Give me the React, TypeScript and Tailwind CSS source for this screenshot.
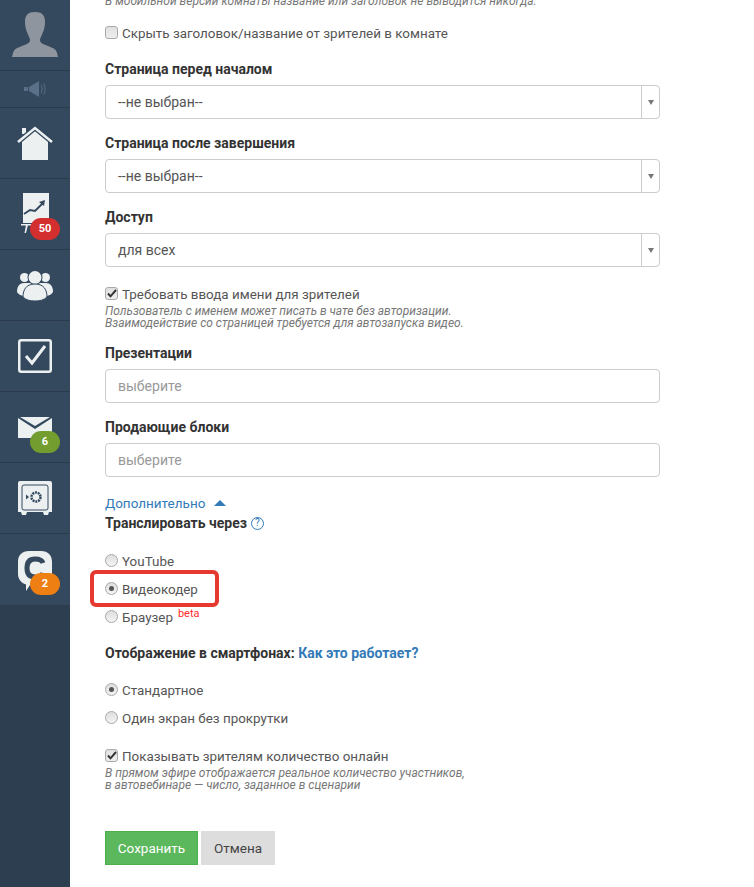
import React from 'react';

const font = { fontFamily: 'Roboto, "Noto Sans", sans-serif' };

const NavRow = ({ h, children }: { h: string; children: React.ReactNode }) => (
	<div className={`relative flex items-center justify-center border-b border-[#2b3a4c] ${h}`}>{children}</div>
);

const Badge = ({ color, children }: { color: string; children: React.ReactNode }) => (
	<span className={`absolute left-[30px] top-[39px] flex h-[22px] w-[30px] items-center justify-center rounded-[11px] text-[11px] font-bold text-white ${color}`}>
		{children}
	</span>
);

const Sidebar = () => (
	<div className="flex w-[70px] shrink-0 flex-col bg-[#2c3e50]">
		<div className="flex flex-col bg-[#34495e]">
			<NavRow h="h-[71px]">
				<svg width="46" height="46" viewBox="0 0 46 46" className="mt-[-1px]">
					<path d="M23 0c-7 0-10 3-10 10 0 4 1 8 2 10 1 3 3 6 3 8 0 3-3 4-8 6-5 2-8 3-9 7l-1 4h46l-1-4c-1-4-4-5-9-7-5-2-8-3-8-6 0-2 2-5 3-8 1-2 2-6 2-10 0-7-3-10-10-10z" fill="#8f959e" />
				</svg>
			</NavRow>
			<NavRow h="h-[37px]">
				<svg width="22" height="16" viewBox="0 0 22 16">
					<path d="M0 6h4v4H0zM5 6l10-6v16L5 10z" fill="#5a7088" />
					<path d="M17 4c1.500 2.500 1.500 5.500 0 8M19.500 2.500c2 3.500 2 7.500 0 11" fill="none" stroke="#5a7088" />
				</svg>
			</NavRow>
			<NavRow h="h-[71px]">
				<svg width="36" height="35" viewBox="0 0 36 35">
					<path d="M5 14 18 3l13 11v20H5z" fill="#ecf0f1" />
					<path d="M5 2h4v6H5z" fill="#ecf0f1" />
					<path d="M1 16 18 2l17 14" fill="none" stroke="#34495e" strokeWidth="5" />
					<path d="M1 16 18 2l17 14" fill="none" stroke="#ecf0f1" strokeWidth="2.500" />
				</svg>
			</NavRow>
			<NavRow h="h-[71px]">
				<svg width="28" height="41" viewBox="0 0 28 41" className="mt-[-1px]">
					<path d="M2 0h26v30H2z" fill="#ecf0f1" />
					<path d="M3 21l6-4 5 1 8-8" fill="none" stroke="#34495e" strokeWidth="2" />
					<path d="M24 7l-1 6-5-4z" fill="#34495e" />
					<path d="M0 31h13v1.500H0zM5 32h2l-2 8H3.500z" fill="#ecf0f1" />
				</svg>
				<Badge color="bg-[#d32f2f]">50</Badge>
			</NavRow>
			<NavRow h="h-[71px]">
				<svg width="36" height="31" viewBox="0 0 36 31">
					<circle cx="7.500" cy="7.500" r="4.500" fill="#ecf0f1" />
					<circle cx="28.500" cy="7.500" r="4.500" fill="#ecf0f1" />
					<path d="M0 22c0-6 3-9 7-9h22c4 0 7 3 7 9-1 2-3 3-6 4H6c-3-1-5-2-6-4z" fill="#ecf0f1" />
					<circle cx="18" cy="7.500" r="7.500" fill="#34495e" />
					<circle cx="18" cy="7.500" r="6.500" fill="#ecf0f1" />
					<path d="M6 27c0-7 3-13 12-13s12 6 12 13c-3 3-7 4-12 4s-9-1-12-4z" fill="#ecf0f1" stroke="#34495e" />
				</svg>
			</NavRow>
			<NavRow h="h-[71px]">
				<svg width="34" height="34" viewBox="0 0 34 34">
					<rect x="1.250" y="1.250" width="31.500" height="31.500" rx="2" fill="none" stroke="#ecf0f1" strokeWidth="2.500" />
					<path d="M8 17l6 7L27 7" fill="none" stroke="#ecf0f1" strokeWidth="3" />
				</svg>
			</NavRow>
			<NavRow h="h-[71px]">
				<svg width="34" height="21" viewBox="0 0 34 21">
					<path d="M0 1v20h34V1L17 12z" fill="#ecf0f1" />
					<path d="M2 0h30L17 9z" fill="#ecf0f1" />
				</svg>
				<Badge color="bg-[#739e2f]">6</Badge>
			</NavRow>
			<NavRow h="h-[71px]">
				<svg width="34" height="34" viewBox="0 0 34 34">
					<path d="M2 0h30a2 2 0 0 1 2 2v29h-3l-1 3h-4l-1-3H9l-1 3H4l-1-3H0V2a2 2 0 0 1 2-2z" fill="#ecf0f1" />
					<rect x="4" y="4" width="26" height="25" rx="2" fill="none" stroke="#34495e" />
					<circle cx="18" cy="16" r="4.500" fill="none" stroke="#34495e" strokeWidth="2.500" strokeDasharray="2 0.800" />
					<path d="M8 13.500v5l3-2.500z" fill="#34495e" />
				</svg>
			</NavRow>
			<div className="relative flex h-[71px] items-center justify-center">
				<svg width="34" height="40" viewBox="0 0 34 40" className="mt-[2px]">
					<path d="M11 0h12c7 0 11 4 11 11v12c0 7-4 11-11 11H12l-4 6v-6.500C3 32 0 28 0 23V11C0 4 4 0 11 0z" fill="#ecf0f1" />
					<path d="M25 12c-1-3-4-4-8-4-5 0-8 3-8 9s3 9 8 9c4 0 7-1 8-4" fill="none" stroke="#34495e" strokeWidth="5" />
				</svg>
				<Badge color="bg-[#ee7f13]">2</Badge>
			</div>
		</div>
	</div>
);

const Label = ({ mt, children }: { mt: string; children: React.ReactNode }) => (
	<div className={`text-[14px] leading-5 font-bold text-[#333333] ${mt}`}>{children}</div>
);

const Hint = ({ children }: { children: React.ReactNode }) => (
	<div className="text-[12px] leading-3 text-[#777777] italic">{children}</div>
);

const CheckBox = ({ checked }: { checked?: boolean }) => (
	<span className="flex h-[13px] w-[13px] shrink-0 items-center justify-center rounded-[3px] border border-[#a9a9a9] bg-linear-to-b from-[#e0e0e0] to-[#eeeeee]">
		{checked && (
			<svg width="10" height="9" viewBox="0 0 10 9">
				<path d="M1 4.500l2.500 2.800L9 1" fill="none" stroke="#333333" strokeWidth="2" />
			</svg>
		)}
	</span>
);

const Radio = ({ checked }: { checked?: boolean }) => (
	<span className="flex h-[13px] w-[13px] shrink-0 items-center justify-center rounded-full border border-[#a9a9a9] bg-linear-to-b from-[#dedede] to-[#f4f4f4]">
		{checked && <span className="h-[5px] w-[5px] rounded-full bg-[#555555]" />}
	</span>
);

const Option = ({ mt, box, children }: { mt: string; box: React.ReactNode; children: React.ReactNode }) => (
	<div className={`flex h-5 items-center text-[13.4px] text-[#555555] ${mt}`}>
		<span className="mt-[-4px] mr-[4px] flex">{box}</span>
		{children}
	</div>
);

const Select = ({ value }: { value: string }) => (
	<div className="mt-[6px] flex h-[34px] items-center rounded-[4px] border border-[#cccccc] text-[14px] text-[#555555]">
		<span className="flex-1 pl-[12px]">{value}</span>
		<span className="flex h-full w-[18px] items-center justify-center border-l border-[#cccccc]">
			<span className="h-0 w-0 border-x-[3px] border-t-[5px] border-x-transparent border-t-[#777777]" />
		</span>
	</div>
);

const TextInput = () => (
	<div className="mt-[6px] flex h-[34px] items-center rounded-[4px] border border-[#cccccc] pl-[12px] text-[14px] text-[#999999]">
		выберите
	</div>
);

const App = () => {
	return (
		<div className="flex h-[887px] w-[754px] overflow-hidden bg-white" style={font}>
			<Sidebar />
			<div className="relative w-[590px] shrink-0 pl-[35px]">
				<div className="mt-[-5px]">
					<Hint>В мобильной версии комнаты название или заголовок не выводится никогда.</Hint>
				</div>
				<Option mt="mt-[17px]" box={<CheckBox />}>Скрыть заголовок/название от зрителей в комнате</Option>

				<Label mt="mt-[15px]">Страница перед началом</Label>
				<Select value="--не выбран--" />
				<Label mt="mt-[14px]">Страница после завершения</Label>
				<Select value="--не выбран--" />
				<Label mt="mt-[14px]">Доступ</Label>
				<Select value="для всех" />

				<Option mt="mt-[18px]" box={<CheckBox checked />}>Требовать ввода имени для зрителей</Option>
				<div>
					<Hint>Пользователь с именем может писать в чате без авторизации.</Hint>
					<Hint>Взаимодействие со страницей требуется для автозапуска видео.</Hint>
				</div>

				<Label mt="mt-[14px]">Презентации</Label>
				<TextInput />
				<Label mt="mt-[14px]">Продающие блоки</Label>
				<TextInput />

				<div className="mt-[16px] flex h-5 items-center text-[13.5px] text-[#337ab7]">
					Дополнительно
					<span className="ml-[9px] h-0 w-0 border-x-[6px] border-b-[6px] border-x-transparent border-b-[#337ab7]" />
				</div>
				<Label mt="mt-0">
					<span className="flex items-center">
						Транслировать через
						<span className="ml-[4px] flex h-[13px] w-[13px] items-center justify-center rounded-full border border-[#337ab7] text-[10px] font-normal text-[#337ab7]">?</span>
					</span>
				</Label>

				<Option mt="mt-[19px]" box={<Radio />}>YouTube</Option>
				<Option mt="mt-2" box={<Radio checked />}>Видеокодер</Option>
				<Option mt="mt-2" box={<Radio />}>
					Браузер
					<sup className="mt-[2px] ml-[5px] text-[11px] text-[#ff2a2a]">beta</sup>
				</Option>

				<Label mt="mt-[15px]">
					Отображение в смартфонах: <span className="text-[#337ab7]">Как это работает?</span>
				</Label>

				<Option mt="mt-[18px]" box={<Radio checked />}>Стандартное</Option>
				<Option mt="mt-2" box={<Radio />}>Один экран без прокрутки</Option>
				<Option mt="mt-[18px]" box={<CheckBox checked />}>Показывать зрителям количество онлайн</Option>
				<div>
					<Hint>В прямом эфире отображается реальное количество участников,</Hint>
					<Hint>в автовебинаре — число, заданное в сценарии</Hint>
				</div>

				<div className="mt-[40px] flex gap-[3px] text-[13.5px]">
					<button className="flex h-[34px] w-[93px] items-center justify-center border border-[#4cae4c] bg-[#5cb85c] text-white">Сохранить</button>
					<button className="flex h-[34px] w-[74px] items-center justify-center bg-[#dddddd] text-[#444444]">Отмена</button>
				</div>

				<div className="absolute top-[570px] left-[20px] h-[37px] w-[129px] rounded-[6px] border-[4px] border-[#e5392f]" />
			</div>
		</div>
	);
};

export default App;
